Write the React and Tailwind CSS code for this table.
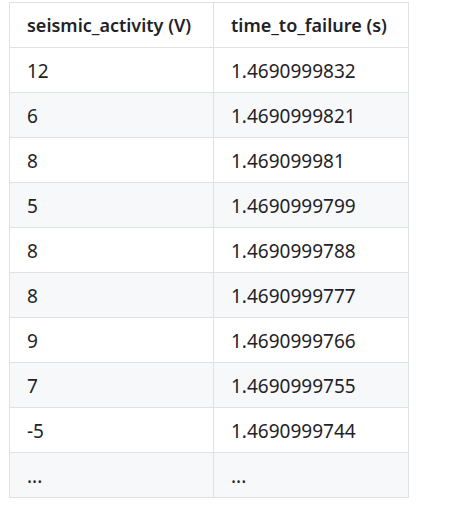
const rows = [
  ['12', '1.4690999832'],
  ['6', '1.4690999821'],
  ['8', '1.469099981'],
  ['5', '1.4690999799'],
  ['8', '1.4690999788'],
  ['8', '1.4690999777'],
  ['9', '1.4690999766'],
  ['7', '1.4690999755'],
  ['-5', '1.4690999744'],
  ['...', '...'],
];

export default function App() {
  return (
    <div className="min-h-[512px] bg-white pt-[2px] pl-[9px]" style={{ fontFamily: '"Noto Sans", sans-serif' }}>
      <table className="table-fixed border-collapse text-[19px] leading-[24px] text-[#1f2328]">
        <thead>
          <tr className="h-[45px]">
            <th className="w-[204px] whitespace-nowrap border border-[#dfe2e5] px-[17px] text-left text-[18px] font-semibold">seismic_activity (V)</th>
            <th className="w-[195px] whitespace-nowrap border border-[#dfe2e5] px-[17px] text-left text-[18px] font-semibold">time_to_failure (s)</th>
          </tr>
        </thead>
        <tbody>
          {rows.map((r, i) => (
            <tr key={i} className={`h-[45px] ${i % 2 === 1 ? 'bg-[#f6f8fa]' : 'bg-white'}`}>
              <td className="border border-[#dfe2e5] px-[17px] pt-[2px]">{r[0]}</td>
              <td className="border border-[#dfe2e5] px-[17px] pt-[2px]">{r[1]}</td>
            </tr>
          ))}
        </tbody>
      </table>
    </div>
  );
}
